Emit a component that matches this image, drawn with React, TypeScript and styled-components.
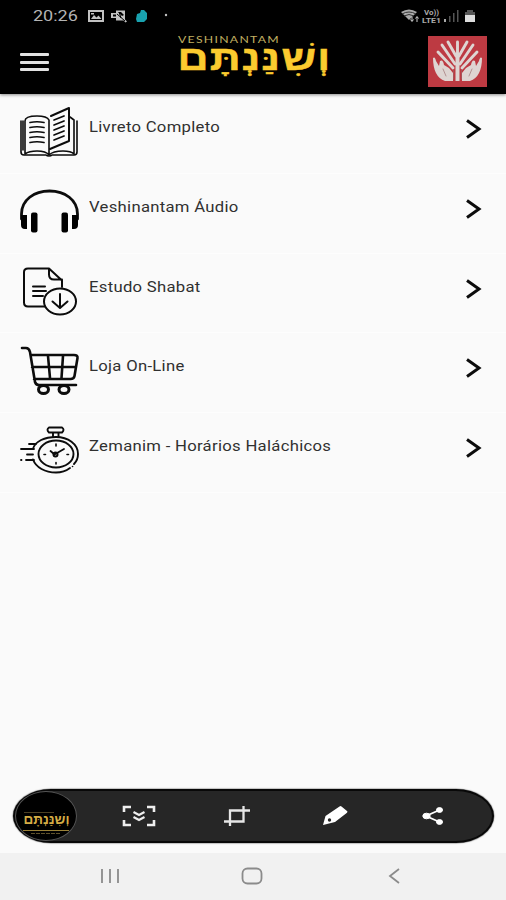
import React from "react";
import styled, { createGlobalStyle } from "styled-components";

const GlobalStyle = createGlobalStyle`
  * { box-sizing: border-box; }
  body { margin: 0; background: #fafafa; }
`;

const Screen = styled.div`
  width: 506px;
  height: 900px;
  display: flex;
  flex-direction: column;
  background: #fafafa;
  overflow: hidden;
  font-family: Roboto, "Liberation Sans", sans-serif;
`;

const Header = styled.header`
  height: 94px;
  flex: none;
  background: #000;
  box-shadow: 0 1px 3px rgba(0, 0, 0, 0.45);
`;

const StatusBar = styled.div`
  height: 32px;
  display: flex;
  align-items: center;
  padding-left: 33px;
  padding-right: 30px;
`;

const Clock = styled.span`
  width: 55px;
  font-size: 15px;
  line-height: 32px;
  color: #b4b4b4;
  transform: scaleX(1.2);
  transform-origin: left;
`;

const StatusSpacer = styled.div`
  flex: 1;
`;

const AppBar = styled.div`
  height: 62px;
  display: flex;
  align-items: flex-start;
`;

const MenuButton = styled.button`
  width: 30px;
  height: 18px;
  margin: 21px 0 0 20px;
  padding: 0;
  border: 0;
  background: transparent;
  display: flex;
  flex-direction: column;
  justify-content: space-between;
`;

const MenuLine = styled.span`
  width: 29px;
  height: 3px;
  border-radius: 1px;
  background: #e2e2e2;
`;

const Brand = styled.div`
  width: 160px;
  height: 56px;
  margin-left: 124px;
`;

const Emblem = styled.div`
  width: 59px;
  height: 51px;
  margin: 4px 0 0 94px;
  background: #bd3a42;
`;

const List = styled.main`
  flex: 1;
`;

const Row = styled.div`
  height: 79.8px;
  display: flex;
  align-items: flex-start;
  padding-left: 17px;
  border-bottom: 1px solid #fdfdfd;
`;

const RowIcon = styled.svg`
  width: 64px;
  height: 78px;
  flex: none;
  fill: none;
  stroke: #0c0c0c;
  stroke-width: 2;
  stroke-linecap: round;
  stroke-linejoin: round;
`;

const Label = styled.span`
  flex: 1;
  margin: 23px 0 0 8px;
  font-size: 14px;
  line-height: 20px;
  letter-spacing: 0.25px;
  color: #303030;
  white-space: nowrap;
  transform: scaleX(1.19);
  transform-origin: left;
`;

const Chevron = styled.svg`
  width: 18px;
  height: 22px;
  margin: 24px 23px 0 0;
  fill: none;
  stroke: #0c0c0c;
  stroke-width: 3;
`;

const Toolbar = styled.div`
  width: 481px;
  height: 54px;
  margin: 0 12px 10px 13px;
  flex: none;
  display: flex;
  align-items: center;
  border: 2px solid #080808;
  border-radius: 38px / 27px;
  background: #262626;
  box-shadow: 0 0 1px 0.5px #8d8d8d;
`;

const Avatar = styled.div`
  width: 62px;
  height: 50px;
  flex: none;
  border: 1.5px solid #555;
  border-radius: 50%;
  background: #000;
  overflow: hidden;
`;

const Tools = styled.div`
  flex: 1;
  display: flex;
  padding-left: 12.5px;
`;

const Tool = styled.button`
  width: 98px;
  height: 30px;
  flex: none;
  padding: 0;
  border: 0;
  background: transparent;
  display: flex;
  align-items: center;
  justify-content: center;
`;

const NavBar = styled.nav`
  height: 47px;
  flex: none;
  display: flex;
  padding-left: 39px;
  background: #f1f1f1;
`;

const NavButton = styled.button`
  width: 142px;
  height: 46px;
  padding: 0;
  border: 0;
  background: transparent;
  display: flex;
  align-items: center;
  justify-content: center;
`;

const WORD = "וְשִׁנַּנְתָּם";

const StatusIcons = () => (
  <svg width="82" height="20" viewBox="0 0 82 20" fill="#c2c2c2">
    <path fillRule="evenodd" d="M0 4h16v12H0zM2 6v8h12V6zM3 13l3-4 2.500 2.500 2-2 3 3.500zM3 7h3v1.500H3z" />
    <path d="M23 7h5V4.500h9v9l2 2-1.500 1-2-2H28V12h-5zM25 8.500v2h3v-2zM30 6l4 4 2-1-3-3z" fillRule="evenodd" />
    <path d="M29 8l8 7M31 6l2 6" stroke="#000" />
    <path d="M49 8l3-1 1-3h3l3 3v6l-3 3h-7l-1-3z" fill="#19a2af" />
    <circle cx="78" cy="9" r="1.200" />
  </svg>
);

const SignalIcons = () => (
  <svg width="76" height="20" viewBox="0 0 76 20" fill="#aaa">
    <path d="M1 6q8-5 16 0l-8 8z" />
    <path d="M2 8q7-4 14 0M4 10q5-3 10 0" stroke="#333" fill="none" />
    <path d="M12 11v4M10.500 13.500l1.500 2 1.500-2M17 16v-5m-1.500 1.500l1.500-2 1.500 2" stroke="#ccc" fill="none" />
    <text x="24" y="9" fontSize="7" fontWeight="700" textLength="15" lengthAdjust="spacingAndGlyphs">Vo))</text>
    <text x="22" y="16.500" fontSize="8" fontWeight="700" textLength="19" lengthAdjust="spacingAndGlyphs">LTE1</text>
    <rect x="44" y="13" width="2" height="3" />
    <path d="M49 10h1.500v6H49zM53 7h1.500v9H53zM57 4h1.500v12H57z" fill="#555" />
    <path d="M67 4h6v2h2v3H65V6h2z" fill="#555" />
    <path d="M65 9h10v7H65z" fill="#ddd" />
  </svg>
);

const BrandMark = () => (
  <svg width="160" height="56" viewBox="0 0 160 56">
    <text x="4" y="11" fontFamily="Lato, sans-serif" fontSize="9.500" letterSpacing="1" fill="#c2b062" textLength="102" lengthAdjust="spacingAndGlyphs">VESHINANTAM</text>
    <text x="80.500" y="37.500" textAnchor="middle" direction="rtl" fontFamily="'Liberation Sans', sans-serif" fontWeight="700" fontSize="34" letterSpacing="1" fill="#fbcb2f" stroke="#fbcb2f" strokeWidth=".5" textLength="154" lengthAdjust="spacingAndGlyphs">{WORD}</text>
  </svg>
);

const Hands = () => (
  <svg width="59" height="51" viewBox="0 0 59 51" fill="none" stroke="#ded5d2" strokeLinecap="round">
    <g fill="#ded5d2" stroke="none">
      <path d="M5 22q2-2 3 3l3 5 1-5q3-2 4 4l5 3 4 5v8h-8q-6-2-9-8-3-6-3-15z" />
      <path d="M54 22q-2-2-3 3l-3 5-1-5q-3-2-4 4l-5 3-4 5v8h8q6-2 9-8 3-6 3-15z" />
      <path d="M27.500 17h4v28h-4z" />
    </g>
    <path d="M29.500 6v36M25 32L10 16M27 28L14 9M28 20L20 6M34 32l15-16M32 28L45 9M31 20l8-14" strokeWidth="2.900" />
    <path d="M25.500 34v9M33.500 34v9" stroke="#a75359" strokeWidth="1" />
    <path d="M18 40l-3-7M41 40l3-7" stroke="#a78181" strokeWidth=".8" />
  </svg>
);

const BookIcon = () => (
  <RowIcon viewBox="0 0 64 78">
    <path d="M8 27q0-5 12-5 10 0 12 4v35q-3-4-12-4-8 0-12 3zM32 61q4-4 14-4 8 0 11 3V26l-4-3" strokeWidth="1.600" />
    <path d="M34 22l18-8v33l-19 8" strokeWidth="2" />
    <path d="M4 27v31q0 3 3 3h22q1 1 3 1t3-1h22q3 0 3-3V27M6 27v29M60 27v29" strokeWidth="1.600" />
    <path d="M13 28.500q7-1.500 14 0M13 33.500q7-1.500 14 0M13 38.500q7-1.500 14 0M13 43.500q7-1.500 14 0M13 48.500q7-1.500 14 0M37 26l10-4M37 31l10-4M37 36l10-4M37 41l10-4M37 46l10-4" strokeWidth="1.700" />
  </RowIcon>
);

const HeadphonesIcon = () => (
  <RowIcon viewBox="0 0 64 78">
    <path d="M4.500 45V40C4.500 26 17 17 32.500 17S60.500 26 60.500 40v5" strokeWidth="2.800" />
    <path d="M4 41h6v14H8q-4 0-4-4zM61 41h-6v14h2q4 0 4-4z" fill="#000" stroke="none" />
    <rect x="14" y="38.500" width="6.500" height="20" rx="2" fill="#000" stroke="none" />
    <rect x="44.500" y="38.500" width="6.500" height="20" rx="2" fill="#000" stroke="none" />
  </RowIcon>
);

const DocumentIcon = () => (
  <RowIcon viewBox="0 0 64 78">
    <path d="M28 52.500H11q-4 0-4-4V18q0-3.500 4-3.500h21l13 12V33M32 14.500v6q0 5 5 5h8M16 32.500h12M16 37h13M16 42h10" />
    <ellipse cx="43" cy="47.500" rx="16" ry="13" />
    <path d="M43 40v13M35.500 47.500L43 54l7.500-6.500" />
  </RowIcon>
);

const CartIcon = () => (
  <RowIcon viewBox="0 0 64 78">
    <path d="M5 15h4q3 0 4 4l5 30q1 3 4 3h37M14 22h43q4 0 3.500 3l-3 18q-.5 3-4 3H17M15 34h43M31 23l2 22M46 23l-1.500 22" strokeWidth="2.600" />
    <ellipse cx="26.500" cy="56.500" rx="5" ry="4" strokeWidth="3" />
    <ellipse cx="47" cy="56.500" rx="5" ry="4" strokeWidth="3" />
  </RowIcon>
);

const StopwatchIcon = () => (
  <RowIcon viewBox="0 0 64 78">
    <path d="M32 14.500h13q3 2 0 5H32q-3-3 0-5zM36 20v4M41.500 20v4" strokeWidth="1.900" />
    <path d="M16 36C18 28 28 24 39 24c12 0 22 7 22 17 0 5-2 8-4 10M53 55c-4 3-9 4.500-14 4.500-11 0-20-5-23-13" strokeWidth="1.900" />
    <ellipse cx="39" cy="41" rx="17.500" ry="13.500" strokeWidth="1.900" />
    <path d="M12 31h7M4 36h13M10 41.500h6M9 47h8M4 47h.5M33.500 38l4 3.500L47 36" strokeWidth="1.800" />
    <circle cx="38.500" cy="41.500" r="2" />
    <path d="M39 31v2M39 49.500v1.500M27 41.500h1.500M50 41.500h1.500M55.500 53.500h.1" strokeWidth="1.600" />
  </RowIcon>
);

const ITEMS = [
  { label: "Livreto Completo", Icon: BookIcon },
  { label: "Veshinantam Áudio", Icon: HeadphonesIcon },
  { label: "Estudo Shabat", Icon: DocumentIcon },
  { label: "Loja On-Line", Icon: CartIcon },
  { label: "Zemanim - Horários Haláchicos", Icon: StopwatchIcon },
];

const AvatarMark = () => (
  <svg width="59" height="47" viewBox="0 0 59 47">
    <path d="M8 20.500h30" stroke="#5e512c" strokeWidth=".8" />
    <text x="30.500" y="32" textAnchor="middle" direction="rtl" fontFamily="'Liberation Sans', sans-serif" fontWeight="700" fontSize="14" fill="#d5ad45" textLength="46" lengthAdjust="spacingAndGlyphs">{WORD}</text>
    <path d="M7 38.500h46" stroke="#9a8138" />
    <path d="M15 41.500h30" stroke="#5e512c" strokeDasharray="4 1" />
  </svg>
);

const CaptureIcon = () => (
  <svg width="34" height="22" viewBox="0 0 34 22" fill="none" stroke="#eee" strokeWidth="2.600">
    <path d="M2 7V2h7M25 2h7v5M32 15v5h-7M9 20H2v-5" />
    <path d="M11.500 7l5.500 3 5.500-3M11.500 12l5.500 3 5.500-3" strokeWidth="2.200" />
  </svg>
);

const CropIcon = () => (
  <svg width="26" height="22" viewBox="0 0 26 22" fill="none" stroke="#e6e6e6" strokeWidth="2.300">
    <path d="M6 21V5.500H26M0 16.500h19.500V1" />
  </svg>
);

const PenIcon = () => (
  <svg width="26" height="22" viewBox="0 0 26 22">
    <path d="M1 20l2.500-9L17.500 1.500q1-.8 2 0L25 6q1 .8 0 1.800L13 17z" fill="#fff" />
    <circle cx="7.500" cy="15" r="1.700" fill="#262626" />
  </svg>
);

const ShareIcon = () => (
  <svg width="22" height="20" viewBox="0 0 22 20" fill="#fff" stroke="#fff">
    <path d="M17.500 4L4 10l13.500 6" fill="none" strokeWidth="1.800" />
    <ellipse cx="4.500" cy="10" rx="3.700" ry="2.800" />
    <ellipse cx="17.500" cy="4" rx="3" ry="2.400" />
    <ellipse cx="17.500" cy="16" rx="3" ry="2.400" />
  </svg>
);

export default function App() {
  return (
    <>
      <GlobalStyle />
      <Screen>
        <Header>
          <StatusBar>
            <Clock>20:26</Clock>
            <StatusIcons />
            <StatusSpacer />
            <SignalIcons />
          </StatusBar>
          <AppBar>
            <MenuButton aria-label="Menu">
              <MenuLine />
              <MenuLine />
              <MenuLine />
            </MenuButton>
            <Brand><BrandMark /></Brand>
            <Emblem><Hands /></Emblem>
          </AppBar>
        </Header>
        <List>
          {ITEMS.map(({ label, Icon }) => (
            <Row key={label}>
              <Icon />
              <Label>{label}</Label>
              <Chevron viewBox="0 0 18 22"><path d="M2 2.500l12 8.500L2 19.500" /></Chevron>
            </Row>
          ))}
        </List>
        <Toolbar>
          <Avatar><AvatarMark /></Avatar>
          <Tools>
            <Tool aria-label="Capture"><CaptureIcon /></Tool>
            <Tool aria-label="Crop"><CropIcon /></Tool>
            <Tool aria-label="Draw"><PenIcon /></Tool>
            <Tool aria-label="Share"><ShareIcon /></Tool>
          </Tools>
        </Toolbar>
        <NavBar>
          <NavButton aria-label="Recents">
            <svg width="20" height="16" viewBox="0 0 20 16" stroke="#8b8b8b" strokeWidth="1.800"><path d="M2 1v14M10 1v14M18 1v14" /></svg>
          </NavButton>
          <NavButton aria-label="Home">
            <svg width="22" height="18" viewBox="0 0 22 18" fill="none" stroke="#8b8b8b" strokeWidth="1.800"><rect x="1.500" y="1.500" width="19" height="15" rx="5" /></svg>
          </NavButton>
          <NavButton aria-label="Back">
            <svg width="14" height="18" viewBox="0 0 14 18" fill="none" stroke="#8b8b8b" strokeWidth="1.800"><path d="M12 2L3 9l9 7" /></svg>
          </NavButton>
        </NavBar>
      </Screen>
    </>
  );
}
